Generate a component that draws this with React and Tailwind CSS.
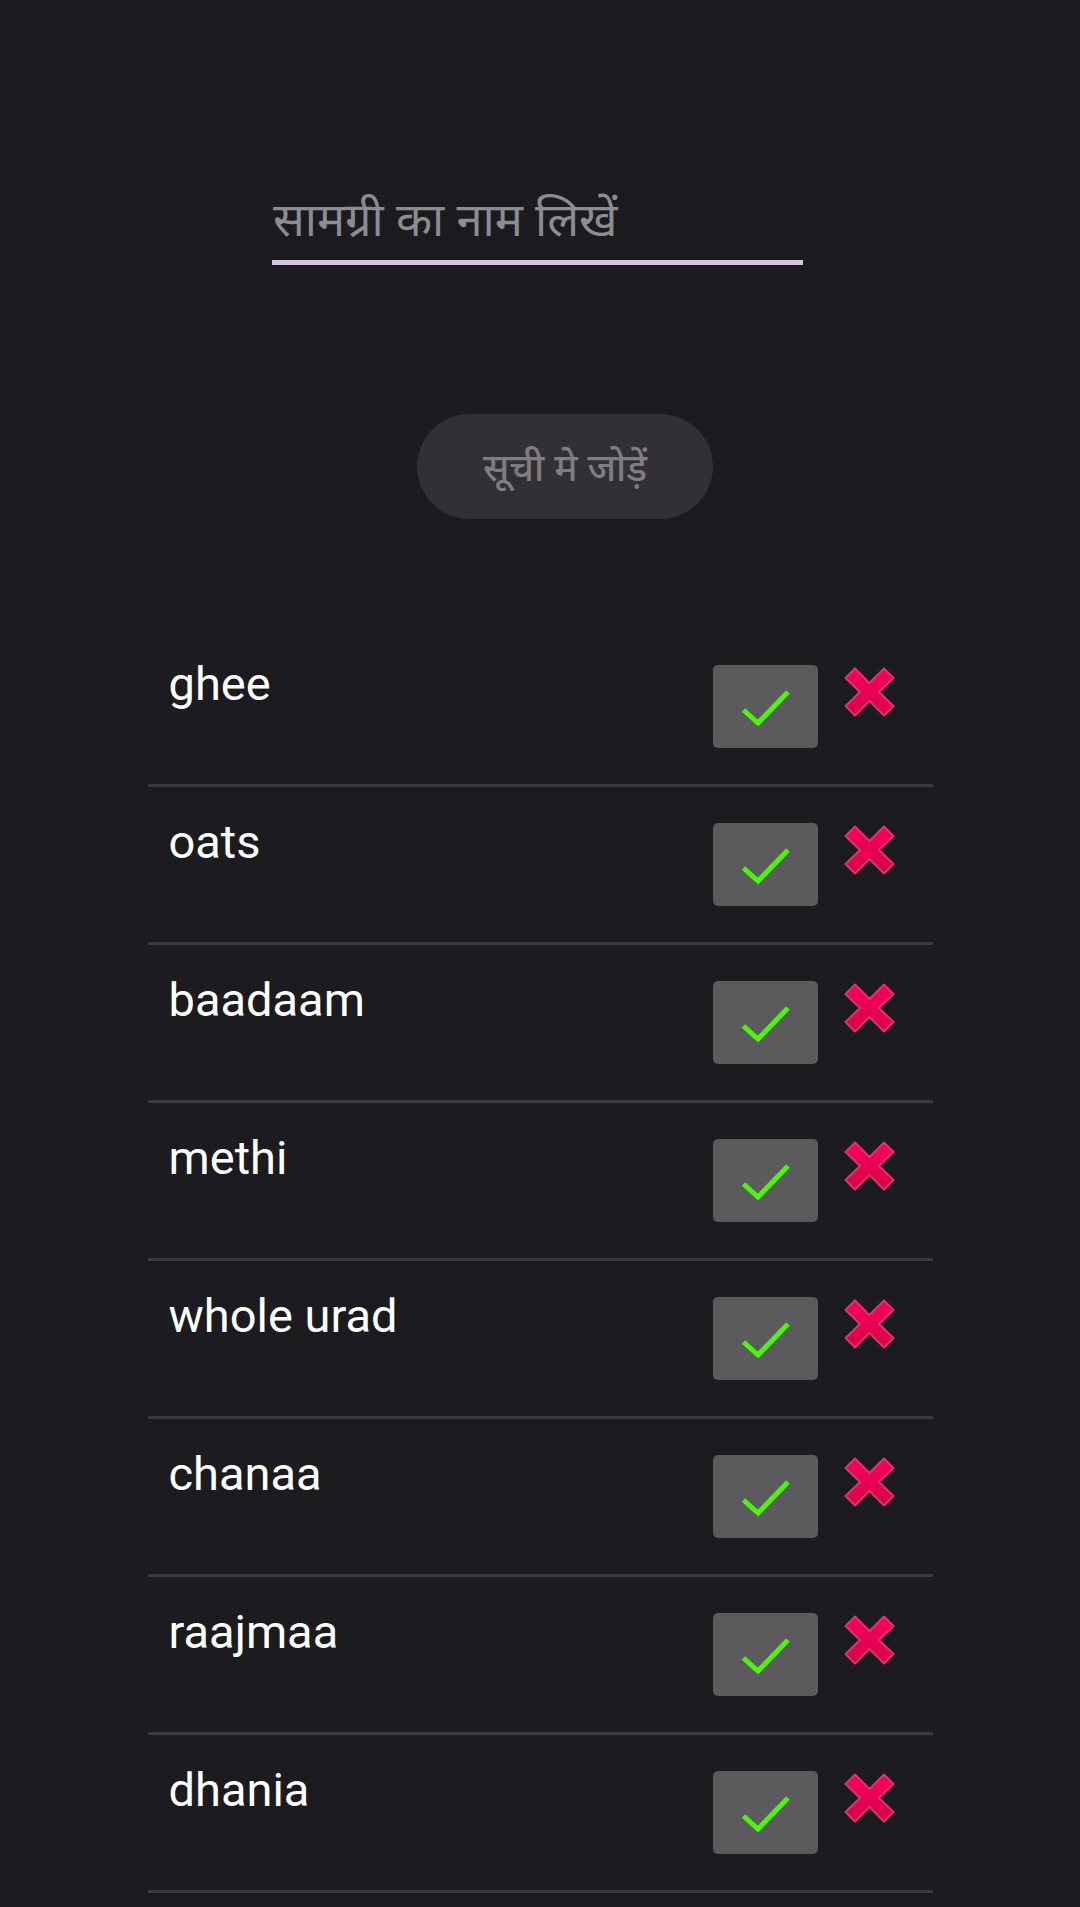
import React from "react";

const items = ["ghee", "oats", "baadaam", "methi", "whole urad", "chanaa", "raajmaa", "dhania"];

function CrossIcon() {
  return (
    <svg width="51" height="50" viewBox="0 0 51 50" className="block">
      <defs>
        <linearGradient id="xg" x1="0" y1="0" x2="0" y2="1">
          <stop offset="0" stopColor="#f8005f" />
          <stop offset="0.7" stopColor="#e2004f" />
          <stop offset="1" stopColor="#d30049" />
        </linearGradient>
      </defs>
      <polygon
        points="1.5,11 11,1.5 25.5,16 40,1.5 49.5,11 35,25 49.5,39 40,48.5 25.5,34 11,48.5 1.5,39 16,25"
        fill="url(#xg)"
        stroke="#e0336e"
        strokeWidth="2"
        strokeLinejoin="round"
      />
    </svg>
  );
}

function CheckBox() {
  return (
    <div className="w-[105px] h-[83px] rounded-[5px] bg-[#5b5b5d] mt-[36px] shrink-0">
      <svg width="105" height="83" viewBox="0 0 105 83" className="block">
        <polyline
          points="30.5,45 45,58 75,27"
          fill="none"
          stroke="#4cf50a"
          strokeWidth="5"
          strokeLinecap="butt"
          strokeLinejoin="miter"
        />
      </svg>
    </div>
  );
}

export default function App() {
  return (
    <div
      className="min-h-screen w-full bg-[#1c1b1f] overflow-hidden"
      style={{ fontFamily: '"Noto Sans", Roboto, "Noto Sans Devanagari", sans-serif' }}
    >
      <div className="flex flex-col items-center">
        <div className="mt-[176px] self-start ml-[272px] w-[531px] border-b-[5px] border-[#d2c5e3]">
          <input
            type="text"
            placeholder="सामग्री का नाम लिखें"
            className="w-full bg-transparent outline-none text-[47px] leading-[84px] h-[84px] text-white placeholder:text-[#8d8c90] pl-[1px]"
          />
        </div>
        <button
          type="button"
          className="mt-[149px] ml-[50px] w-[296px] h-[105px] rounded-full bg-[#323035] text-[#7e7d81] text-[38px] font-medium"
        >
          सूची मे जोड़ें
        </button>
        <div className="mt-[110px] w-[785px] flex flex-col">
          {items.map((it) => (
            <div key={it} className="h-[158px] border-b-[3px] border-[#3a3a3c] flex items-start pl-[21px] pr-[38px]">
              <div
                className="pt-[27px] text-[47px] leading-[55px] text-white flex-1"
                style={{ fontFamily: 'Roboto, "Noto Sans", sans-serif' }}
              >
                {it}
              </div>
              <CheckBox />
              <div className="ml-[26px] mt-[38px] shrink-0">
                <CrossIcon />
              </div>
            </div>
          ))}
        </div>
      </div>
    </div>
  );
}
